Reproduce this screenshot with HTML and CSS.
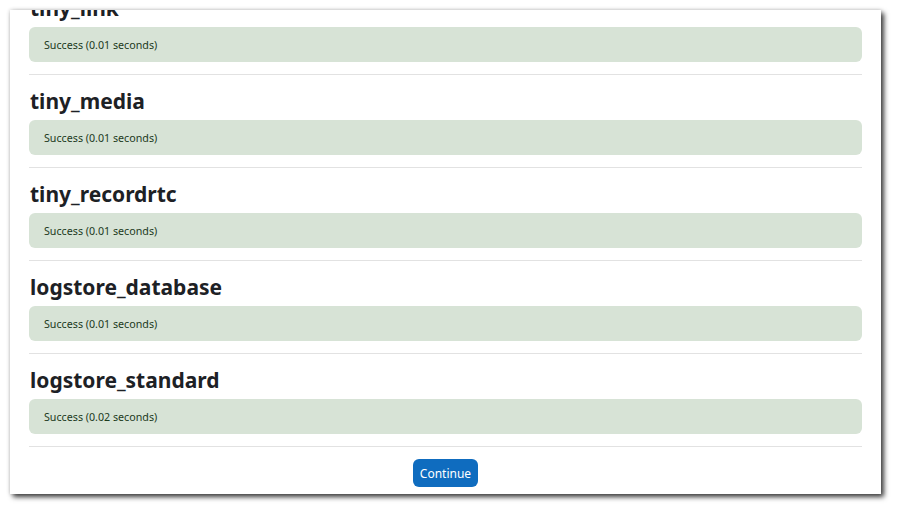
FILE: index.html
```html
<!DOCTYPE html>
<html lang="en">
<head>
  <meta charset="UTF-8" />
  <title>Upgrading plugins</title>
  <link rel="stylesheet" href="styles.css">
</head>
<body>
  <div class="window">
    <div class="content">
      <section class="plugin">
        <h3>tiny_link</h3>
        <div class="alert">Success (0.01 seconds)</div>
        <hr>
      </section>
      <section class="plugin">
        <h3>tiny_media</h3>
        <div class="alert">Success (0.01 seconds)</div>
        <hr>
      </section>
      <section class="plugin">
        <h3>tiny_recordrtc</h3>
        <div class="alert">Success (0.01 seconds)</div>
        <hr>
      </section>
      <section class="plugin">
        <h3>logstore_database</h3>
        <div class="alert">Success (0.01 seconds)</div>
        <hr>
      </section>
      <section class="plugin">
        <h3>logstore_standard</h3>
        <div class="alert">Success (0.02 seconds)</div>
        <hr>
      </section>
      <div class="continue">
        <button class="btn">Continue</button>
      </div>
    </div>
  </div>
</body>
</html>
```

FILE: styles.css
```css
* {
  box-sizing: border-box;
}

html, body {
  height: 512px;
}

body {
  margin: 0;
  padding: 10px 0 0 10px;
  background: #ffffff;
  font-family: 'Noto Sans', 'Open Sans', sans-serif;
  color: #1d2125;
  overflow: hidden;
}

.window {
  width: 871px;
  height: 484px;
  background: #ffffff;
  overflow: hidden;
  box-shadow: 3px 3px 5px rgba(0, 0, 0, 0.75), 0 0 4px rgba(0, 0, 0, 0.2);
}

.content {
  margin-top: -16px;
  padding: 0 19px;
}

.plugin {
  padding-top: 12px;
}

.plugin:first-child {
  padding-top: 0;
}

.plugin h3 {
  margin: 1px 0 6px 1px;
  font-size: 21px;
  line-height: 26px;
  font-weight: 700;
  color: #1d2125;
}

.alert {
  height: 35px;
  padding: 0 15px;
  display: flex;
  align-items: center;
  background: #d7e3d6;
  color: #1c3a1c;
  border-radius: 6px;
  font-size: 10.7px;
}

.plugin hr {
  margin: 12px 0 0;
  border: 0;
  border-top: 1px solid #e2e2e2;
}

.continue {
  display: flex;
  justify-content: center;
  padding-top: 12px;
}

.btn {
  height: 28px;
  width: 65px;
  border: 0;
  border-radius: 6px;
  background: #0f6cbf;
  color: #ffffff;
  font-family: 'Noto Sans', 'Open Sans', sans-serif;
  font-size: 12px;
  padding: 0;
}
```
